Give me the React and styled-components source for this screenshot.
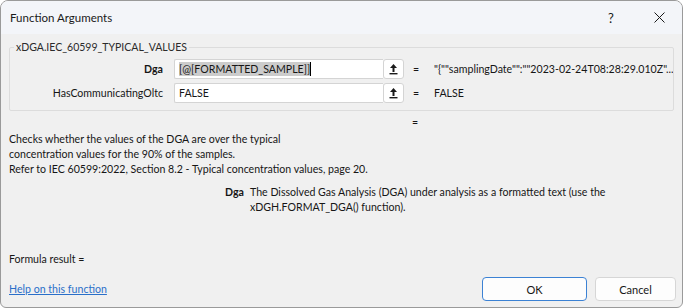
import React from 'react';
import styled, { createGlobalStyle } from 'styled-components';

const Global = createGlobalStyle`
    html, body {
        margin: 0;
        padding: 0;
        background: #ffffff;
    }
    body {
        font-family: Lato, "Noto Sans", sans-serif;
        font-size: 10.6px;
        color: #161616;
    }
`;

const Window = styled.div`
    width: 683px;
    height: 308px;
    box-sizing: border-box;
    border: 1px solid #9a9a9a;
    border-radius: 8px 8px 6px 6px;
    overflow: hidden;
    background: #f0f0f0;
    display: flex;
    flex-direction: column;
`;

const TitleBar = styled.div`
    height: 33px;
    flex: none;
    background: #f3f5f9;
    display: flex;
    align-items: center;
    padding-left: 9px;
`;

const Title = styled.div`
    flex: 1;
    font-size: 11.5px;
    color: #1a1a1a;
`;

const TitleButton = styled.div`
    width: ${p => p.w}px;
    height: 33px;
    display: flex;
    align-items: center;
    justify-content: center;
    font-size: 13px;
    color: #1a1a1a;
`;

const Body = styled.div`
    flex: 1;
    display: flex;
    flex-direction: column;
    padding: 7px 6px 0 7px;
`;

const Group = styled.fieldset`
    margin: 0 2px 0 1px;
    padding: 6px 0 7px 0;
    border: 1px solid #dcdcdc;
    border-radius: 2px;
    min-width: 0;
`;

const Legend = styled.legend`
    padding: 0 2px;
    margin-left: 4px;
    font-size: 10.5px;
    color: #2b2b2b;
`;

const ArgGrid = styled.div`
    display: grid;
    grid-template-columns: 164px 230px 30px minmax(0, 1fr);
    row-gap: 4px;
    align-items: center;
`;

const ArgLabel = styled.div`
    text-align: right;
    padding-right: 11px;
    font-weight: ${p => (p.bold ? 700 : 400)};
    white-space: nowrap;
`;

const Field = styled.div`
    height: 20px;
    display: flex;
    align-items: stretch;
`;

const Input = styled.div`
    flex: 1;
    background: #ffffff;
    border: 1px solid #d4d4d4;
    border-right: none;
    border-radius: 2px 0 0 2px;
    display: flex;
    align-items: center;
    padding-left: 4px;
    white-space: nowrap;
    overflow: hidden;
`;

const Selected = styled.span`
    background: #cccccc;
    border-right: 1px solid #000;
    line-height: 14px;
`;

const PickButton = styled.div`
    width: 19px;
    background: #ffffff;
    border: 1px solid #d4d4d4;
    border-radius: 3px;
    display: flex;
    align-items: center;
    justify-content: center;
`;

const Eq = styled.div`
    text-align: center;
    padding-right: 6px;
`;

const Value = styled.div`
    white-space: nowrap;
    overflow: hidden;
`;

const ResultRow = styled.div`
    display: grid;
    grid-template-columns: 395px 30px;
    margin-top: 2px;
    height: 18px;
    align-items: center;
`;

const Description = styled.div`
    margin-top: 1px;
    line-height: 15px;
    padding-left: 1px;
`;

const ArgHelp = styled.div`
    margin-top: 8px;
    display: grid;
    grid-template-columns: 242px 1fr;
    line-height: 14.5px;
`;

const ArgHelpName = styled.div`
    font-weight: 700;
    text-align: right;
    padding-right: 6px;
`;

const ArgHelpText = styled.div`
    width: 362px;
`;

const Spacer = styled.div`
    flex: 1;
`;

const Formula = styled.div`
    padding-left: 1px;
    margin-bottom: 12px;
`;

const Footer = styled.div`
    display: flex;
    align-items: center;
    padding-bottom: 6px;
`;

const HelpLink = styled.a`
    flex: 1;
    padding-left: 1px;
    color: #2a6fc9;
    text-decoration: underline;
`;

const Button = styled.div`
    width: ${p => p.w}px;
    height: 24px;
    box-sizing: border-box;
    margin-left: 8px;
    background: #fdfdfd;
    border: 1px solid ${p => (p.primary ? '#3c82d4' : '#d6d6d6')};
    border-radius: 4px;
    display: flex;
    align-items: center;
    justify-content: center;
    font-size: 11px;
`;

const PickIcon = () => (
    <svg width="9" height="12" viewBox="0 0 9 12">
        <path d="M4.5 1 L1 5 H3.5 V9 H5.5 V5 H8 Z" fill="#1a1a1a" />
        <rect x="0.5" y="10" width="8" height="1.4" fill="#1a1a1a" />
    </svg>
);

const CloseIcon = () => (
    <svg width="11" height="11" viewBox="0 0 11 11">
        <path d="M0.5 0.5 L10.5 10.5 M10.5 0.5 L0.5 10.5" stroke="#1a1a1a" strokeWidth="1" />
    </svg>
);

const args = [
    { name: 'Dga', bold: true, value: '"{""samplingDate"":""2023-02-24T08:28:29.010Z"...', selected: '[@[FORMATTED_SAMPLE]]' },
    { name: 'HasCommunicatingOltc', bold: false, value: 'FALSE', text: 'FALSE' },
];

const App = () => (
    <>
        <Global />
        <Window>
            <TitleBar>
                <Title>Function Arguments</Title>
                <TitleButton w={50}>?</TitleButton>
                <TitleButton w={46}><CloseIcon /></TitleButton>
            </TitleBar>
            <Body>
                <Group>
                    <Legend>xDGA.IEC_60599_TYPICAL_VALUES</Legend>
                    <ArgGrid>
                        {args.map(a => (
                            <React.Fragment key={a.name}>
                                <ArgLabel bold={a.bold}>{a.name}</ArgLabel>
                                <Field>
                                    <Input>
                                        {a.selected ? <Selected>{a.selected}</Selected> : a.text}
                                    </Input>
                                    <PickButton><PickIcon /></PickButton>
                                </Field>
                                <Eq>=</Eq>
                                <Value>{a.value}</Value>
                            </React.Fragment>
                        ))}
                    </ArgGrid>
                </Group>
                <ResultRow>
                    <div />
                    <Eq>=</Eq>
                </ResultRow>
                <Description>
                    Checks whether the values of the DGA are over the typical<br />
                    concentration values for the 90% of the samples.<br />
                    Refer to IEC 60599:2022, Section 8.2 - Typical concentration values, page 20.
                </Description>
                <ArgHelp>
                    <ArgHelpName>Dga</ArgHelpName>
                    <ArgHelpText>
                        The Dissolved Gas Analysis (DGA) under analysis as a formatted text (use the xDGH.FORMAT_DGA() function).
                    </ArgHelpText>
                </ArgHelp>
                <Spacer />
                <Formula>Formula result =</Formula>
                <Footer>
                    <HelpLink href="#">Help on this function</HelpLink>
                    <Button primary w={105}>OK</Button>
                    <Button w={81}>Cancel</Button>
                </Footer>
            </Body>
        </Window>
    </>
);

export default App;
